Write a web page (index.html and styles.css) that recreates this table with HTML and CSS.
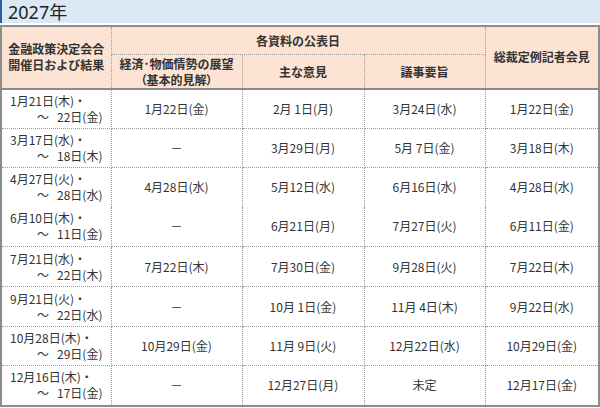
FILE: index.html
```html
<!DOCTYPE html>
<html lang="ja">
<head>
<meta charset="utf-8">
<link rel="stylesheet" href="styles.css">
</head>
<body>
<div class="title">2027年</div>
<table class="sched">
  <colgroup>
    <col class="c1"><col class="c2"><col class="c3"><col class="c4"><col class="c5">
  </colgroup>
  <thead>
    <tr class="h1">
      <th rowspan="2" class="meet">金融政策決定会合<br>開催日および結果</th>
      <th colspan="3" class="pub">各資料の公表日</th>
      <th rowspan="2" class="press">総裁定例記者会見</th>
    </tr>
    <tr class="h2">
      <th class="outlook">経済･物価情勢の展望<br><span class="paren">（基本的見解）</span></th>
      <th>主な意見</th>
      <th>議事要旨</th>
    </tr>
  </thead>
  <tbody>
    <tr class="r40">
      <td class="date"><span class="l1">1月21日(木)・</span><span class="l2">～<span class="gap"></span>22日(金)</span></td>
      <td>1月22日(金)</td><td>2月 1日(月)</td><td>3月24日(水)</td><td>1月22日(金)</td>
    </tr>
    <tr class="r39">
      <td class="date"><span class="l1">3月17日(水)・</span><span class="l2">～<span class="gap"></span>18日(木)</span></td>
      <td>－</td><td>3月29日(月)</td><td>5月 7日(金)</td><td>3月18日(木)</td>
    </tr>
    <tr class="r39 nob">
      <td class="date"><span class="l1">4月27日(火)・</span><span class="l2">～<span class="gap"></span>28日(水)</span></td>
      <td>4月28日(水)</td><td>5月12日(水)</td><td>6月16日(水)</td><td>4月28日(水)</td>
    </tr>
    <tr class="r40">
      <td class="date"><span class="l1">6月10日(木)・</span><span class="l2">～<span class="gap"></span>11日(金)</span></td>
      <td>－</td><td>6月21日(月)</td><td>7月27日(火)</td><td>6月11日(金)</td>
    </tr>
    <tr class="r40">
      <td class="date"><span class="l1">7月21日(水)・</span><span class="l2">～<span class="gap"></span>22日(木)</span></td>
      <td>7月22日(木)</td><td>7月30日(金)</td><td>9月28日(火)</td><td>7月22日(木)</td>
    </tr>
    <tr class="r40">
      <td class="date"><span class="l1">9月21日(火)・</span><span class="l2">～<span class="gap"></span>22日(水)</span></td>
      <td>－</td><td>10月 1日(金)</td><td>11月 4日(木)</td><td>9月22日(水)</td>
    </tr>
    <tr class="r39">
      <td class="date"><span class="l1">10月28日(木)・</span><span class="l2">～<span class="gap"></span>29日(金)</span></td>
      <td>10月29日(金)</td><td>11月 9日(火)</td><td>12月22日(水)</td><td>10月29日(金)</td>
    </tr>
    <tr class="r40">
      <td class="date"><span class="l1">12月16日(木)・</span><span class="l2">～<span class="gap"></span>17日(金)</span></td>
      <td>－</td><td>12月27日(月)</td><td>未定</td><td>12月17日(金)</td>
    </tr>
  </tbody>
</table>
</body>
</html>
```
FILE: styles.css
```css
html, body {
  margin: 0;
  padding: 0;
  background: #ffffff;
}
body {
  width: 600px;
  height: 408px;
  overflow: hidden;
  font-family: "Noto Sans CJK JP", "Noto Sans", sans-serif;
  color: #333333;
}
.title {
  height: 23px;
  line-height: 25px;
  margin-bottom: 2px;
  padding-left: 6px;
  border-left: 2px solid #2f5f9e;
  background: #dbe9f7;
  font-family: "Noto Sans", "Noto Sans CJK JP", sans-serif;
  font-size: 18px;
  color: #222222;
}
.sched {
  border-collapse: collapse;
  table-layout: fixed;
  width: 598px;
  border: 2px solid #8c8c8c;
  font-size: 12px;
}
.c1 { width: 110px; }
.c2 { width: 131px; }
.c3 { width: 122px; }
.c4 { width: 121px; }
.c5 { width: 114px; }
.sched th {
  background: #fce3d4;
  font-weight: bold;
  font-size: 12px;
  line-height: 16px;
  color: #333333;
  padding: 0;
  border: 1px dotted #9a9a9a;
  text-align: center;
  vertical-align: middle;
}
.paren { font-feature-settings: "palt"; }
.sched .h1 { height: 28px; }
.sched .h2 { height: 34px; }
.sched .h2 th { border-bottom: 2px solid #8c8c8c; padding-top: 1px; }
.sched .meet, .sched .press { border-bottom: 2px solid #8c8c8c; }
.sched .pub { padding-top: 1px; }
.sched td {
  padding: 0;
  border: 1px dotted #9a9a9a;
  text-align: center;
  vertical-align: middle;
  line-height: 16px;
  white-space: pre;
  color: #333333;
}
.sched .r40 { height: 40px; }
.sched .r39 { height: 39px; }
.sched .nob td { border-bottom: none; }
.sched .nob + tr td { border-top: none; }
.sched td.date {
  text-align: left;
  padding-left: 8px;
}
.l1, .l2 { display: block; }
.l2 { padding-left: 27px; }
.gap { display: inline-block; width: 8px; }
```
